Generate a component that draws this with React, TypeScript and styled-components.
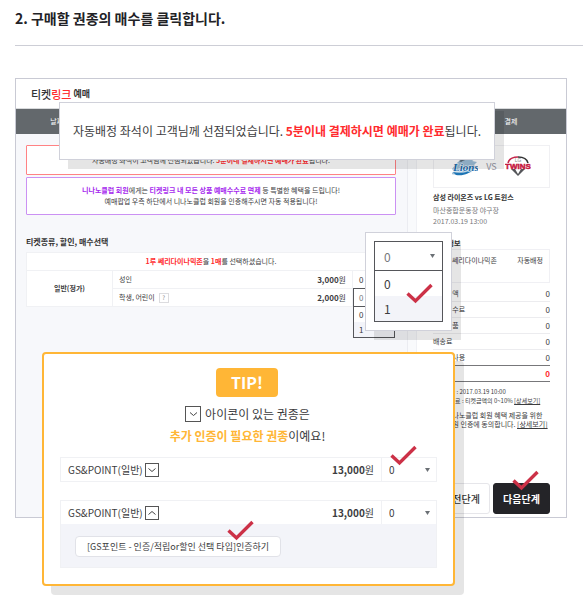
import React from "react";
import styled, { createGlobalStyle, css } from "styled-components";

const GlobalStyle = createGlobalStyle`
  * { box-sizing: border-box; }
  body {
    margin: 0;
    background: #fff;
    color: #3c3c3e;
    font-family: "Noto Sans CJK KR", "Noto Sans", sans-serif;
  }
  button, select, input { font-family: inherit; color: inherit; margin: 0; }
`;

const Page = styled.main`
  padding: 0 0 87px 15px;
`;

const Heading = styled.h2`
  margin: 0;
  padding: 8px 0 17px;
  font-size: 14px;
  line-height: 20px;
  font-weight: 700;
  color: #222226;
  border-bottom: 1px solid #cdced6;
`;

const Demo = styled.section`
  position: relative;
  margin: 32px 16px 0 0;
  border: 1px solid #c9cad4;
  background: #fff;
  font-size: 7px;
  line-height: 11px;
`;

const Header = styled.header`
  display: flex;
  align-items: center;
  gap: 2px;
  height: 30px;
  padding: 0 15px;
  border-bottom: 1px solid #d8dadc;
  color: #333;
`;

const Logo = styled.span`
  font-size: 11px;
  line-height: 16px;
  font-weight: 500;
`;

const LogoSub = styled.span`
  font-size: 9px;
  line-height: 16px;
  font-weight: 700;
`;

const Red = styled.span<{ $bold?: boolean }>`
  color: #ff2b2e;
  font-weight: ${(p) => (p.$bold ? 700 : 500)};
`;

const Purple = styled.b`
  color: #a528ee;
`;

const Steps = styled.ol`
  display: flex;
  margin: 0;
  padding: 0;
  list-style: none;
  background: #63686c;
  color: #fff;
`;

const Step = styled.li`
  flex: 1;
  text-align: center;
  line-height: 25px;
`;

const Columns = styled.div`
  display: grid;
  grid-template-columns: 1fr 150px;
  column-gap: 8px;
  background: #f9fafc;
`;

const Booking = styled.div`
  padding: 11px 11px 0 10px;
  background: #f7f8fb;
  border-right: 1px solid #ebecf1;
`;

const Notice = styled.p<{ $tone: "red" | "purple" }>`
  display: flex;
  flex-direction: column;
  justify-content: center;
  margin: 0 0 2px;
  min-height: ${(p) => (p.$tone === "red" ? 30 : 38)}px;
  border: 1px solid ${(p) => (p.$tone === "red" ? "#ff8284" : "#cb91f3")};
  border-radius: 1px;
  background: #fff;
  text-align: center;
`;

const SectionTitle = styled.h3<{ $size: number }>`
  margin: ${(p) => (p.$size > 7 ? "21px 0 4px" : "10px 0 0")};
  font-size: ${(p) => p.$size}px;
  line-height: 12px;
  font-weight: 700;
  color: #333;
`;

const TicketTable = styled.table`
  width: 100%;
  border-collapse: collapse;
  table-layout: fixed;
  background: #fff;
  th, td {
    height: 18px;
    padding: 0 6px;
    border: 1px solid #f0f1f4;
    text-align: left;
    font-weight: 400;
  }
`;

const Caption = styled.th`
  && { text-align: center; }
`;

const Grade = styled.th`
  && { text-align: center; font-weight: 700; }
`;

const Kind = styled.td`
  && { border-right: 0; }
`;

const Price = styled.td`
  && { border-left: 0; text-align: right; font-size: 8px; }
`;

const CountCell = styled.td`
  position: relative;
  font-size: 8px;
`;

const Help = styled.button`
  width: 10px;
  height: 10px;
  margin-left: 4px;
  padding: 0;
  border: 1px solid #dcdcdf;
  background: #fff;
  font-size: 6px;
  line-height: 8px;
  color: #888;
`;

const ListFrame = styled.div<{ $large?: boolean }>`
  border: 1px solid #55565a;
  background: #fff;
  ${(p) =>
    p.$large
      ? css`
          font-size: 12px;
          --head: 29px;
          --row: 25px;
          --inset: 9px;
        `
      : css`
          position: absolute;
          z-index: 1;
          top: -1px;
          left: 0;
          right: 0;
          font-size: 8px;
          --head: 18px;
          --row: 15px;
          --inset: 5px;
        `}
`;

const ListHead = styled.button`
  display: flex;
  align-items: center;
  justify-content: space-between;
  width: 100%;
  height: var(--head);
  padding: 0 7px 0 var(--inset);
  border: 0;
  border-bottom: 1px solid #55565a;
  background: #fff;
  font-size: inherit;
  color: #77787c;
`;

const ListItems = styled.ul`
  margin: 0;
  padding: 0;
  list-style: none;
`;

const ListItem = styled.li`
  height: var(--row);
  line-height: var(--row);
  padding-left: var(--inset);
  &[aria-selected="true"] { background: #f3f4f9; }
`;

const Sidebar = styled.aside`
  padding: 11px 16px 3px;
  border-left: 1px solid #f0f1f5;
  background: #fff;
`;

const Match = styled.div`
  display: flex;
  align-items: center;
  justify-content: center;
  gap: 8px;
  height: 43px;
  border: 1px solid #f0f0f3;
  color: #9697a5;
  font-size: 9px;
`;

const MatchName = styled.p`
  margin: 3px 0 2px;
  line-height: 12px;
  font-weight: 700;
  color: #333;
`;

const MatchInfo = styled.p`
  margin: 0;
  color: #77777a;
`;

const SeatBox = styled.div`
  display: flex;
  justify-content: space-between;
  height: 34px;
  padding: 5px 6px;
  border: 1px solid #f0f0f4;
  margin-bottom: 3px;
`;

const Costs = styled.dl`
  margin: 0;
`;

const Cost = styled.div<{ $strong?: boolean; $total?: boolean }>`
  display: flex;
  justify-content: space-between;
  height: 16px;
  line-height: 15px;
  border-bottom: 1px solid ${(p) => (p.$strong ? "#77777a" : "#ececef")};
  color: ${(p) => (p.$total ? "#ff2b2e" : "inherit")};
  font-weight: ${(p) => (p.$total ? 700 : 400)};
  dd { margin: 0; font-size: 8px; }
`;

const Note = styled.p`
  margin: 5px 0 0;
  font-size: 6px;
  line-height: 9px;
  white-space: nowrap;
`;

const Detail = styled.a`
  color: inherit;
  text-decoration: underline;
`;

const Agree = styled.label`
  display: flex;
  gap: 5px;
  margin: 6px 0 54px;
  font-size: 7px;
  line-height: 9px;
  white-space: nowrap;
  input { width: 8px; height: 8px; }
`;

const Actions = styled.div`
  display: flex;
  gap: 3px;
`;

const Action = styled.button<{ $primary?: boolean }>`
  position: relative;
  flex: 1;
  height: 31px;
  padding: 0;
  border: 1px solid ${(p) => (p.$primary ? "#242428" : "#e6e6ea")};
  border-radius: 3px;
  background: ${(p) => (p.$primary ? "#242428" : "#fff")};
  && { color: ${(p) => (p.$primary ? "#fff" : "#333")}; }
  font-size: 10px;
  font-weight: ${(p) => (p.$primary ? 700 : 500)};
  white-space: nowrap;
`;

const Callout = styled.div`
  position: absolute;
  z-index: 2;
  border: 1px solid #d0d1da;
  background: #fff;
  box-shadow: 9px 9px 0 rgba(0, 0, 0, 0.1);
`;

const SeatCallout = styled(Callout)`
  top: 23px;
  left: 43px;
  right: 71px;
  padding: 18px 0;
  font-size: 12px;
  line-height: 20px;
  text-align: center;
`;

const CountCallout = styled(Callout)`
  top: 153px;
  right: 114px;
  width: 87px;
  padding: 8px;
`;

const TipCallout = styled(Callout)`
  z-index: 3;
  top: 273px;
  left: 26px;
  right: 111px;
  display: flex;
  flex-direction: column;
  align-items: center;
  padding: 14px 16px 16px;
  border: 2px solid #ffb636;
  border-radius: 4px;
`;

const TipBadge = styled.strong`
  width: 62px;
  margin-right: 3px;
  border-radius: 4px;
  background: #ffb636;
  color: #fff;
  font-size: 16px;
  line-height: 29px;
  text-align: center;
`;

const TipText = styled.p`
  margin: 6px 2px 10px 0;
  font-size: 12px;
  line-height: 22px;
  text-align: center;
`;

const TipLine = styled.span`
  display: flex;
  align-items: center;
  justify-content: center;
  gap: 4px;
`;

const Orange = styled.b`
  color: #ffb636;
`;

const Toggle = styled.span<{ $size: number }>`
  display: inline-flex;
  align-items: center;
  justify-content: center;
  width: ${(p) => p.$size}px;
  height: ${(p) => p.$size}px;
  border: 1px solid #555;
  background: #fff;
`;

const ToggleButton = styled(Toggle).attrs({ as: "button" })`
  padding: 0;
`;

const Ticket = styled.div`
  width: 100%;
  border: 1px solid #f0f1f4;
  & + & { margin-top: 18px; }
`;

const TicketRow = styled.div`
  position: relative;
  display: flex;
  align-items: center;
  height: 23px;
  padding-left: 7px;
  font-size: 10px;
`;

const TicketName = styled.span`
  display: flex;
  align-items: center;
  gap: 2px;
  flex: 1;
`;

const SelectBox = styled.label`
  display: grid;
  align-items: center;
  width: 55px;
  height: 100%;
  margin-left: 7px;
  border-left: 1px solid #f0f1f4;
  > * { grid-area: 1 / 1; }
  > svg { justify-self: end; margin-right: 6px; pointer-events: none; }
`;

const Select = styled.select`
  appearance: none;
  width: 100%;
  height: 100%;
  padding: 0 7px;
  border: 0;
  background: transparent;
  font-size: 10px;
`;

const Verify = styled.div`
  position: relative;
  padding: 12px 14px 10px;
  background: #f3f4f9;
`;

const VerifyButton = styled.button`
  display: block;
  height: 21px;
  padding: 0 11px;
  border: 1px solid #e1e2e8;
  border-radius: 4px;
  background: #fff;
  font-size: 9px;
  white-space: nowrap;
`;

const CheckMark = styled.svg<{ $top: number; $left?: number; $right?: number }>`
  position: absolute;
  z-index: 4;
  top: ${(p) => p.$top}px;
  ${(p) => (p.$left !== undefined ? `left: ${p.$left}px;` : "")}
  ${(p) => (p.$right !== undefined ? `right: ${p.$right}px;` : "")}
  pointer-events: none;
`;

const Check = (props: { $top: number; $left?: number; $right?: number }) => (
  <CheckMark {...props} width="27" height="21" viewBox="0 0 27 21" aria-hidden="true">
    <path d="M1.5 10.5 9.5 18 25.5 2" fill="none" stroke="#cc3147" strokeWidth="3.4" />
  </CheckMark>
);

const Arrow = () => (
  <svg width="5" height="4" viewBox="0 0 5 4" aria-hidden="true">
    <path d="M0 0h5L2.500 4z" fill="#6b7075" />
  </svg>
);

const Chevron = ({ up, wide = 8 }: { up?: boolean; wide?: number }) => (
  <svg width={wide} height="6" viewBox="0 0 8 6" aria-hidden="true">
    <path d={up ? "M.5 4.5 4 1.5l3.5 3" : "M.5 1.5 4 4.5l3.5-3"} fill="none" stroke="#444" />
  </svg>
);

const LionsLogo = () => (
  <svg width="26" height="21" viewBox="0 0 26 21" role="img" aria-label="Lions">
    <path d="M4 8C8 3 16 1 23 3l-3 2 5 1-3 3 2 3-5 2 1 2-6 1-7 2-8-1 3-3-2-2z" fill="#9dbfd8" />
    <path d="M1 16c7 2 15 1 21-4-4 6-11 8-18 7z" fill="#1d75b5" />
    <path d="M7 5c4-3 9-3 13-2-5 0-8 1-11 3z" fill="#5c6e7c" />
    <text x="1" y="15" fontFamily="Liberation Serif" fontSize="11" fontWeight="700" fontStyle="italic" fill="#1769aa" stroke="#fff" strokeWidth="1" paintOrder="stroke">Lions</text>
  </svg>
);

const TwinsLogo = () => (
  <svg width="26" height="23" viewBox="0 0 26 23" role="img" aria-label="LG Twins">
    <path d="M3 8C4 4 8 2 13 2" fill="none" stroke="#c5264b" strokeWidth="1.6" />
    <path d="M13 2c5 0 9 2 10 6" fill="none" stroke="#333" strokeWidth="1.6" />
    <path d="M6 14h14l-7 7z" fill="#55565a" />
    <path d="M10 14h6l-3 5z" fill="#fff" />
    <text x="13" y="7" textAnchor="middle" fontFamily="Liberation Sans" fontSize="5" fill="#888">LG</text>
    <text x="13" y="14" textAnchor="middle" fontFamily="Liberation Sans" fontSize="8" fontWeight="700" fill="#c5173f" stroke="#c5173f" strokeWidth=".5">TWINS</text>
  </svg>
);

const OpenList = ({ large }: { large?: boolean }) => (
  <ListFrame $large={large}>
    <ListHead type="button" aria-label="매수" aria-haspopup="listbox" aria-expanded="true">
      0 <Arrow />
    </ListHead>
    <ListItems role="listbox" aria-label="매수">
      <ListItem role="option" aria-selected="false">0</ListItem>
      <ListItem role="option" aria-selected="true">1</ListItem>
    </ListItems>
  </ListFrame>
);

const SeatMessage = () => (
  <span>
    자동배정 좌석이 고객님께 선점되었습니다. <Red $bold>5분이내 결제하시면 예매가 완료</Red>됩니다.
  </span>
);

const PointTicket = ({ open, children }: { open?: boolean; children?: React.ReactNode }) => (
  <Ticket>
    <TicketRow>
      <TicketName>
        GS&amp;POINT(일반)
        <ToggleButton $size={14} aria-label="인증" aria-expanded={!!open}>
          <Chevron up={open} />
        </ToggleButton>
      </TicketName>
      <span><b>13,000</b>원</span>
      <SelectBox>
        <Select aria-label="매수" defaultValue="0">
          <option>0</option>
          <option>1</option>
        </Select>
        <Arrow />
      </SelectBox>
      {!open && <Check $top={-13} $right={19} />}
    </TicketRow>
    {children}
  </Ticket>
);

const steps = ["날짜/회차선택", "좌석", "권종", "예매확인", "결제"];
const costs = ["티켓금액", "예매수수료", "부가상품", "배송료", "포인트사용"];

export default function App() {
  return (
    <>
      <GlobalStyle />
      <Page>
        <Heading>2. 구매할 권종의 매수를 클릭합니다.</Heading>
        <Demo>
          <Header>
            <Logo>티켓<Red>링크</Red></Logo>
            <LogoSub>예매</LogoSub>
          </Header>
          <Steps>
            {steps.map((s) => <Step key={s}>{s}</Step>)}
          </Steps>
          <Columns>
            <Booking>
              <Notice $tone="red"><SeatMessage /></Notice>
              <Notice $tone="purple">
                <span>
                  <Purple>니나노클럽 회원</Purple>에게는 <Purple>티켓링크 내 모든 상품 예매수수료 면제</Purple> 등 특별한 혜택을 드립니다!
                </span>
                <span>예매팝업 우측 하단에서 니나노클럽 회원을 인증해주시면 자동 적용됩니다!</span>
              </Notice>
              <SectionTitle $size={8}>티켓종류, 할인, 매수선택</SectionTitle>
              <TicketTable>
                <colgroup>
                  <col style={{ width: "86px" }} />
                  <col />
                  <col />
                  <col style={{ width: "43px" }} />
                </colgroup>
                <thead>
                  <tr>
                    <Caption colSpan={4}>
                      <Red $bold>1루 쎄리다이나믹존</Red>을 <Red $bold>1매</Red>를 선택하셨습니다.
                    </Caption>
                  </tr>
                </thead>
                <tbody>
                  <tr>
                    <Grade rowSpan={2} scope="rowgroup">일반(정가)</Grade>
                    <Kind>성인</Kind>
                    <Price><b>3,000</b>원</Price>
                    <CountCell>0</CountCell>
                  </tr>
                  <tr>
                    <Kind>학생, 어린이<Help type="button">?</Help></Kind>
                    <Price><b>2,000</b>원</Price>
                    <CountCell><OpenList /></CountCell>
                  </tr>
                </tbody>
              </TicketTable>
            </Booking>
            <Sidebar>
              <Match><LionsLogo />VS<TwinsLogo /></Match>
              <MatchName>삼성 라이온즈 vs LG 트윈스</MatchName>
              <MatchInfo>마산종합운동장 야구장</MatchInfo>
              <MatchInfo>2017.03.19 13:00</MatchInfo>
              <SectionTitle $size={7}>좌석 정보</SectionTitle>
              <SeatBox>
                <span>1루 쎄리다이나믹존</span>
                <span>자동배정</span>
              </SeatBox>
              <Costs>
                {costs.map((c, i) => (
                  <Cost key={c} $strong={i === costs.length - 1}><dt>{c}</dt><dd>0</dd></Cost>
                ))}
                <Cost $strong $total><dt>총금액</dt><dd>0</dd></Cost>
              </Costs>
              <Note>
                취소기한 : 2017.03.19 10:00<br />
                취소수수료 : 티켓금액의 0~10% <Detail href="#fee">[상세보기]</Detail>
              </Note>
              <Agree>
                <input type="checkbox" />
                <span>
                  니나노클럽 회원 혜택 제공을 위한<br />
                  회원 인증에 동의합니다. <Detail href="#agree">[상세보기]</Detail>
                </span>
              </Agree>
              <Actions>
                <Action type="button">이전단계</Action>
                <Action type="button" $primary>다음단계<Check $top={-14} $right={10} /></Action>
              </Actions>
            </Sidebar>
          </Columns>

          <SeatCallout role="status"><SeatMessage /></SeatCallout>

          <CountCallout>
            <OpenList large />
            <Check $top={50} $left={40} />
          </CountCallout>

          <TipCallout role="note">
            <TipBadge>TIP!</TipBadge>
            <TipText>
              <TipLine><Toggle $size={16}><Chevron wide={9} /></Toggle>아이콘이 있는 권종은</TipLine>
              <span><Orange>추가 인증이 필요한 권종</Orange>이예요!</span>
            </TipText>
            <PointTicket />
            <PointTicket open>
              <Verify>
                <VerifyButton type="button">[GS포인트 - 인증/적립or할인 선택 타입]인증하기</VerifyButton>
                <Check $top={-4} $left={166} />
              </Verify>
            </PointTicket>
          </TipCallout>
        </Demo>
      </Page>
    </>
  );
}
